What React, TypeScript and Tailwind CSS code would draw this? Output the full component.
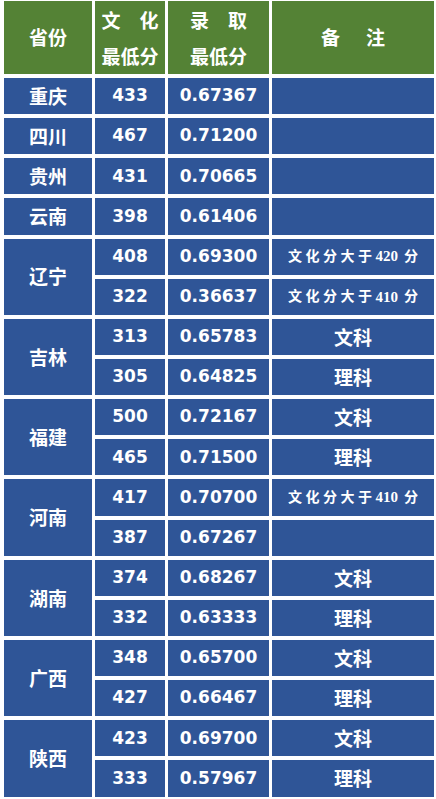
import React from "react";

/* ================= TYPES ================= */

type Row = {
  score: string;
  ratio: string;
  note?: string;
};

type Group = {
  province: string;
  rows: Row[];
};

/* ================= DATA ================= */

const groups: Group[] = [
  { province: "重庆", rows: [{ score: "433", ratio: "0.67367" }] },
  { province: "四川", rows: [{ score: "467", ratio: "0.71200" }] },
  { province: "贵州", rows: [{ score: "431", ratio: "0.70665" }] },
  { province: "云南", rows: [{ score: "398", ratio: "0.61406" }] },
  {
    province: "辽宁",
    rows: [
      { score: "408", ratio: "0.69300", note: "420" },
      { score: "322", ratio: "0.36637", note: "410" },
    ],
  },
  {
    province: "吉林",
    rows: [
      { score: "313", ratio: "0.65783", note: "文科" },
      { score: "305", ratio: "0.64825", note: "理科" },
    ],
  },
  {
    province: "福建",
    rows: [
      { score: "500", ratio: "0.72167", note: "文科" },
      { score: "465", ratio: "0.71500", note: "理科" },
    ],
  },
  {
    province: "河南",
    rows: [
      { score: "417", ratio: "0.70700", note: "410" },
      { score: "387", ratio: "0.67267" },
    ],
  },
  {
    province: "湖南",
    rows: [
      { score: "374", ratio: "0.68267", note: "文科" },
      { score: "332", ratio: "0.63333", note: "理科" },
    ],
  },
  {
    province: "广西",
    rows: [
      { score: "348", ratio: "0.65700", note: "文科" },
      { score: "427", ratio: "0.66467", note: "理科" },
    ],
  },
  {
    province: "陕西",
    rows: [
      { score: "423", ratio: "0.69700", note: "文科" },
      { score: "333", ratio: "0.57967", note: "理科" },
    ],
  },
];

const cjk = "font-['Noto_Sans_CJK_SC',sans-serif]";
const num = "font-['DejaVu_Sans','Noto_Sans_CJK_SC',sans-serif]";

/* ================= CELLS ================= */

const Note: React.FC<{ note?: string }> = ({ note }) => {
  if (!note) return <div className="bg-[#2f5597]" />;

  // "文化分大于 xxx 分" – 宋体风格的小字
  if (/^\d+$/.test(note)) {
    return (
      <div className="bg-[#2f5597] flex items-center justify-center text-white text-[14px] font-bold font-['Liberation_Serif','Noto_Sans_CJK_SC',serif]">
        <span className="tracking-[3.5px]">文化分大于</span>
        <span className="text-[15px]">{note}</span>
        <span className="ml-[6px]">分</span>
      </div>
    );
  }

  return (
    <div className={`bg-[#2f5597] flex items-center justify-center text-white text-[19px] font-bold ${cjk}`}>
      {note}
    </div>
  );
};

/* ================= APP ================= */

const App: React.FC = () => {
  return (
    <div className="w-[436px] h-[799px] bg-white pt-[1px] pl-[4px] overflow-hidden">
      <div className="grid grid-cols-[88px_70px_101px_162px] grid-rows-[73px_repeat(18,36.15px)] gap-x-[3px] gap-y-[4px]">
        {/* ---------- header ---------- */}
        <div className={`bg-[#548235] flex items-center justify-center text-white text-[19px] font-bold ${cjk}`}>
          省份
        </div>
        <div className={`bg-[#548235] flex flex-col items-center justify-center gap-[10px] text-white text-[19px] font-bold leading-[26px] ${cjk}`}>
          <span>文　化</span>
          <span>最低分</span>
        </div>
        <div className={`bg-[#548235] flex flex-col items-center justify-center gap-[10px] text-white text-[19px] font-bold leading-[26px] ${cjk}`}>
          <span>录　取</span>
          <span>最低分</span>
        </div>
        <div className={`bg-[#548235] flex items-center justify-center text-white text-[19px] font-bold ${cjk}`}>
          <span>备</span>
          <span className="ml-[26px]">注</span>
        </div>

        {/* ---------- body ---------- */}
        {groups.map((g) => (
          <React.Fragment key={g.province}>
            <div
              className={`${g.rows.length > 1 ? "row-span-2" : ""} bg-[#2f5597] flex items-center justify-center text-white text-[19px] font-bold ${cjk}`}
            >
              {g.province}
            </div>
            {g.rows.map((r) => (
              <React.Fragment key={r.score}>
                <div className={`bg-[#2f5597] flex items-center justify-center text-white text-[17px] font-bold ${num}`}>
                  {r.score}
                </div>
                <div className={`bg-[#2f5597] flex items-center justify-center text-white text-[17px] font-bold ${num}`}>
                  {r.ratio}
                </div>
                <Note note={r.note} />
              </React.Fragment>
            ))}
          </React.Fragment>
        ))}
      </div>
    </div>
  );
};

export default App;
